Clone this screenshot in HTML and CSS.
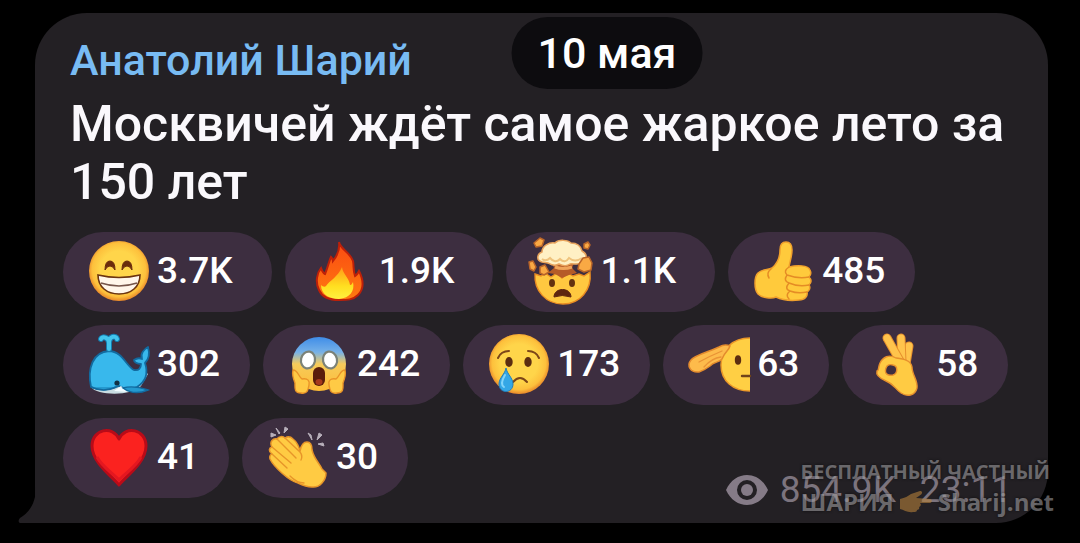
FILE: index.html
```
<!DOCTYPE html>
<html lang="ru">
<head>
    <meta charset="UTF-8">
    <meta name="viewport" content="width=device-width, initial-scale=1.0">
    <title>Анатолий Шарий</title>
    <link rel="stylesheet" href="styles.css">
</head>
<body>
    <svg class="defs" width="0" height="0" aria-hidden="true">
        <defs>
            <radialGradient id="face" cx="50%" cy="48%" r="52%">
                <stop offset="0.6" stop-color="#ffd54a"/>
                <stop offset="0.86" stop-color="#fdc03c"/>
                <stop offset="1" stop-color="#e8872a"/>
            </radialGradient>
            <linearGradient id="scream" x1="0" y1="0" x2="0" y2="1">
                <stop offset="0" stop-color="#3f8de8"/>
                <stop offset="0.28" stop-color="#76b1e8"/>
                <stop offset="0.5" stop-color="#f6cb5b"/>
                <stop offset="1" stop-color="#fdbb35"/>
            </linearGradient>
            <linearGradient id="flame" x1="0" y1="0" x2="0" y2="1">
                <stop offset="0" stop-color="#fa4a12"/>
                <stop offset="1" stop-color="#ff7a10"/>
            </linearGradient>
            <linearGradient id="flame-core" x1="0" y1="0" x2="0" y2="1">
                <stop offset="0" stop-color="#ff9b18"/>
                <stop offset="0.6" stop-color="#ffdf20"/>
                <stop offset="1" stop-color="#fff040"/>
            </linearGradient>
        </defs>
    </svg>

    <main class="chat">
        <article class="bubble">
            <a class="author" href="#author">Анатолий Шарий</a>
            <p class="message">Москвичей ждёт самое жаркое лето за 150 лет</p>

            <div class="reactions">
                <button class="reaction reaction-long" type="button">
                    <svg class="emoji" viewBox="0 0 64 64" aria-hidden="true">
                        <circle cx="32" cy="32" r="30" fill="url(#face)"/>
                        <path d="M18 31Q18 22 23 22T28 31Q26 27 23 27T18 31ZM35 31Q35 22 40 22T45 31Q43 27 40 27T35 31Z" fill="#6b2c0c" stroke="#6b2c0c"/>
                        <path d="M11 36Q32 41 53 36C53 48 44 55 32 55S11 48 11 36Z" fill="#fff6ea" stroke="#6b3410" stroke-width="1.6"/>
                        <path d="M14 44Q32 50 50 44" fill="none" stroke="#75554a" stroke-width="1.5"/>
                    </svg>
                    <span>3.7K</span>
                </button>
                <button class="reaction reaction-long" type="button">
                    <svg class="emoji" viewBox="0 0 64 64" aria-hidden="true">
                        <path d="M30 3C31 10 41 13 44 22C45 27 44 32 46 37C48 36 49 34 50 32C55 42 55 50 49 56C44 61 38 61 30 61C20 61 13 58 10 51C6 43 8 34 12 29C13 32 14 34 16 35C19 28 20 22 22 18C23 19 24 20 24 22C28 17 31 10 30 3Z" fill="url(#flame)" stroke="#bd2009" stroke-width="2"/>
                        <path d="M33 28C34 36 40 38 41 46C43 46 43 44 44 43C46 52 41 59 30 60C20 60 12 55 12 46C14 48 16 48 17 47C20 42 29 38 33 28Z" fill="url(#flame-core)"/>
                    </svg>
                    <span>1.9K</span>
                </button>
                <button class="reaction reaction-long" type="button">
                    <svg class="emoji" viewBox="0 0 64 64" aria-hidden="true">
                        <path d="M5 35L11 37L15 34L21 38L27 34L32 39L38 34L43 37L49 35L54 37L60 33C62 51 50 65 33 65C16 65 4 52 5 35Z" fill="#ffc840" stroke="#e98b22" stroke-width="1.4"/>
                        <path d="M22 24H44L42 29L47 34L39 36L32 39L25 35L18 34L24 29Z" fill="#b55b28"/>
                        <path d="M25 28Q33 31 42 28" fill="none" stroke="#f0a45a" stroke-width="3"/>
                        <path d="M12 23C5 21 8 14 12 13C12 7 19 3 25 4C29 0 38 1 41 4C48 4 51 8 52 12C58 15 57 21 52 23C48 27 43 24 40 25C36 28 31 26 29 25C24 28 20 25 18 24Z" fill="#fff0c4" stroke="#e8a35c" stroke-width="1.5"/>
                        <path d="M12 20Q16 23 20 19Q25 25 30 20Q35 25 39 19Q45 24 52 19" fill="none" stroke="#efc37d" stroke-width="2"/>
                        <path d="M4 4L10-1L14 1L12 7L6 8ZM54 5L58 3L60 6L58 10L54 9ZM-1 23L3 22L6 28L4 32L0 30ZM10 28L15 26L19 33L14 36L10 34ZM49 25L53 19L59 18L62 24L61 31L54 33L48 30Z" fill="#f9a944" stroke="#b96529" stroke-width="1.5" stroke-linejoin="round"/>
                        <ellipse cx="22" cy="44" rx="3" ry="4" fill="#63310f"/>
                        <ellipse cx="42" cy="44" rx="3" ry="4" fill="#63310f"/>
                        <path d="M24 58C24 48 41 48 41 58Q32 55 24 58Z" fill="#5f250f" stroke="#5f250f" stroke-linejoin="round"/>
                    </svg>
                    <span>1.1K</span>
                </button>
                <button class="reaction" type="button">
                    <svg class="emoji" viewBox="0 0 64 64" aria-hidden="true">
                        <path d="M34 3C38 3 40 6 40 11C40 17 38 22 37 28C45 26 56 26 58 31C59 33 59 36 57 38C60 41 59 44 57 46C59 49 57 52 55 53C56 57 53 61 47 61C38 62 30 61 24 58C20 60 10 59 6 55C2 50 2 38 6 34C10 30 16 31 20 29C26 24 28 18 28 11C28 5 30 3 34 3Z" fill="#ffca3c" stroke="#f0a02c" stroke-width="1.5"/>
                        <path d="M19 30Q14 34 17 39M37 28Q31 32 35 36Q46 40 57 38M35 36Q31 42 37 44Q46 48 57 46M37 44Q32 50 38 52Q46 55 55 53M38 52Q33 56 37 60" fill="none" stroke="#e58c25" stroke-width="1.5" stroke-linecap="round"/>
                    </svg>
                    <span>485</span>
                </button>
                <button class="reaction" type="button">
                    <svg class="emoji" viewBox="0 0 64 64" aria-hidden="true">
                        <path d="M4 55C10 64 46 64 54 54L61 42L56 38L28 50Z" fill="#c9dce2"/>
                        <path d="M4 55C0 36 6 20 22 19C35 19 40 35 47 38C52 39 54 36 54 32C50 32 47 30 47 28C50 26 53 26 55 27C53 22 57 17 61 15C63 22 62 27 58 31C62 43 58 50 50 55C44 58 37 57 32 54C24 58 12 59 4 55Z" fill="#38b8ec" stroke="#126a9f" stroke-width="1.8" stroke-linejoin="round"/>
                        <path d="M27 59L34 54L40 60Z" fill="#f2fbff"/>
                        <path d="M4 55Q17 61 29 55M36 56Q46 53 61 58Q47 64 36 56Z" fill="#249ad0" stroke="#126a9f" stroke-width="1.5"/>
                        <path d="M22 17V8M22 11C22 5 15 4 14 7M22 11C22 4 29 3 30 7" fill="none" stroke="#147caf" stroke-width="6" stroke-linecap="round"/>
                        <path d="M22 17V8M22 11C22 5 15 4 14 7M22 11C22 4 29 3 30 7" fill="none" stroke="#43c6ed" stroke-width="4" stroke-linecap="round"/>
                        <circle cx="30" cy="51" r="2.6" fill="#123043"/>
                    </svg>
                    <span>302</span>
                </button>
                <button class="reaction" type="button">
                    <svg class="emoji" viewBox="0 0 64 64" aria-hidden="true">
                        <circle cx="32" cy="32" r="27" fill="url(#scream)"/>
                        <ellipse cx="21" cy="28" rx="7" ry="8.5" transform="rotate(12 21 28)" fill="#fff" stroke="#7b8278" stroke-width="2.2"/>
                        <ellipse cx="43" cy="28" rx="7" ry="8.5" transform="rotate(-12 43 28)" fill="#fff" stroke="#7b8278" stroke-width="2.2"/>
                        <rect x="26" y="35" width="12" height="19" rx="6" fill="#5a1d0b"/>
                        <ellipse cx="32" cy="50" rx="3.5" ry="3" fill="#a5391d"/>
                        <path d="M6 38C11 38 11 44 15 47C21 46 23 49 22 53C21 59 20 62 14 61C7 61 8 56 8 51C6 46 5 42 6 38ZM58 38C53 38 53 44 49 47C43 46 41 49 42 53C43 59 44 62 50 61C57 61 56 56 56 51C58 46 59 42 58 38Z" fill="#ffca45" stroke="#e99328" stroke-width="1.4"/>
                    </svg>
                    <span>242</span>
                </button>
                <button class="reaction" type="button">
                    <svg class="emoji" viewBox="0 0 64 64" aria-hidden="true">
                        <circle cx="32" cy="32" r="30" fill="url(#face)"/>
                        <ellipse cx="22" cy="30" rx="3.7" ry="5" fill="#5c2d10"/>
                        <ellipse cx="41" cy="30" rx="3.7" ry="5" fill="#5c2d10"/>
                        <path d="M11 26Q14 19 22 19M41 19Q49 19 52 26M26 50Q33 42 40 50" fill="none" stroke="#7c4618" stroke-width="2" stroke-linecap="round"/>
                        <path d="M19 36C20 42 26 46 26 52C26 62 12 62 12 52C12 46 18 42 19 36Z" fill="#34a7e6" stroke="#237eb9"/>
                        <path d="M18 43C15 48 14 53 17 55" fill="none" stroke="#83d5fa" stroke-width="2" stroke-linecap="round"/>
                    </svg>
                    <span>173</span>
                </button>
                <button class="reaction" type="button">
                    <svg class="emoji" viewBox="0 0 64 64" aria-hidden="true">
                        <path d="M63 6C46 6 34 17 34 33S46 59 63 59Z" fill="#ffcf44"/>
                        <path d="M63 6C46 6 34 17 34 33S46 59 63 59" fill="none" stroke="#eb9828" stroke-width="1.5"/>
                        <ellipse cx="51" cy="28" rx="3.2" ry="4.7" fill="#5c2d10"/>
                        <path d="M55 44H63" stroke="#70431a" stroke-width="2.4" stroke-linecap="round"/>
                        <path d="M4 28C8 23 24 19 32 15C37 12 41 13 43 14C42 18 38 20 36 25C34 31 27 29 23 34C19 37 15 39 12 40C4 41-1 34 4 28Z" fill="#fdbb4b" stroke="#e48b2d" stroke-width="1.5"/>
                        <path d="M12 30Q23 24 35 19M17 35Q25 26 34 25" fill="none" stroke="#e99335" stroke-width="1.3" stroke-linecap="round"/>
                    </svg>
                    <span>63</span>
                </button>
                <button class="reaction" type="button">
                    <svg class="emoji" viewBox="0 0 64 64" aria-hidden="true">
                        <g stroke-linecap="round">
                            <path d="M43 14L40 32" stroke="#e6902d" stroke-width="9"/>
                            <path d="M43 14L40 32" stroke="#ffc44c" stroke-width="7"/>
                            <path d="M35 6L36 30" stroke="#e6902d" stroke-width="9"/>
                            <path d="M35 6L36 30" stroke="#ffc44c" stroke-width="7"/>
                            <path d="M21 6L34 29" stroke="#e6902d" stroke-width="9"/>
                            <path d="M21 6L34 29" stroke="#ffc44c" stroke-width="7"/>
                        </g>
                        <path fill-rule="evenodd" d="M14 31C17 25 23 22 30 26C37 27 45 28 46 35C46 43 52 48 51 56C49 64 41 65 35 61C29 57 28 52 20 49C13 46 10 42 11 39C13 39 12 35 14 31ZM20 36C18 42 22 44 27 43C32 41 32 34 27 33C24 32 21 33 20 36Z" fill="#ffcb43" stroke="#e6902d" stroke-width="1.4"/>
                    </svg>
                    <span>58</span>
                </button>
                <button class="reaction" type="button">
                    <svg class="emoji" viewBox="0 0 64 64" aria-hidden="true">
                        <path d="M32 60C27 53 5 38 5 21C5 4 26 0 32 14C38 0 59 4 59 21C59 38 37 53 32 60Z" fill="#fb221f" stroke="#b90b18" stroke-width="3" stroke-linejoin="round"/>
                        <path d="M10 32C15 42 27 49 32 55C37 49 49 42 54 32" fill="none" stroke="#e41720" stroke-width="3"/>
                    </svg>
                    <span>41</span>
                </button>
                <button class="reaction" type="button">
                    <svg class="emoji" viewBox="0 0 64 64" aria-hidden="true">
                        <path d="M34 26C35 21 37 17 41 17C45 17 46 21 46 25C48 34 54 39 56 44L60 48C60 55 54 63 46 62C40 62 36 60 32 58C23 56 8 42 4 34C3 31 5 29 6 29C2 26 3 23 6 22C3 17 7 13 11 14C13 11 17 11 19 13C22 11 25 12 27 14C31 17 33 22 34 26Z" fill="#ffcb43" stroke="#e79529" stroke-width="1.5" stroke-linejoin="round"/>
                        <path d="M6 29L21 43M6 22L25 38M11 14L30 33M19 13L34 27Q37 31 35 35M24 51Q31 58 38 58" fill="none" stroke="#e79529" stroke-width="1.4" stroke-linecap="round"/>
                        <path d="M5 8L10 10L5 12ZM10 3L14 8L13 9ZM19 2L22 4L18 8ZM42 8L45 10L46 15ZM53 8L56 10L51 15ZM52 19L57 18L58 21Z" fill="#b7afba" stroke="#b7afba" stroke-linejoin="round"/>
                    </svg>
                    <span>30</span>
                </button>
            </div>

            <footer class="meta">
                <svg class="eye" viewBox="0 0 42 32" aria-hidden="true">
                    <path fill-rule="evenodd" d="M0 16C9-4 33-4 42 16C33 36 9 36 0 16ZM11 16A10 10 0 1 0 31 16A10 10 0 1 0 11 16Z"/>
                    <circle cx="21" cy="16" r="6"/>
                </svg>
                <span>854.9K</span>
                <time>23:11</time>
            </footer>

            <svg class="tail" viewBox="0 0 18 36" aria-hidden="true">
                <path d="M18 0C18 16 11 26 2 31C0 33 0 36 3 36H18Z"/>
            </svg>
        </article>

        <time class="date">10 мая</time>

        <div class="watermark">
            <div class="watermark-top">БЕСПЛАТНЫЙ ЧАСТНЫЙ</div>
            <div class="watermark-bottom">
                <span>ШАРИЯ</span>
                <svg class="hand" viewBox="0 0 32 22" aria-hidden="true">
                    <path d="M0 8C5 7 8 5 11 3L20 0C23 0 23 3 19 5L16 7L30 8C33 9 32 12 29 12L20 12C22 14 20 16 19 16C20 18 18 19 17 19C17 21 15 21 13 21C8 22 4 19 0 18Z"/>
                </svg>
                <span>Sharij.net</span>
            </div>
        </div>
    </main>
</body>
</html>
```
FILE: styles.css
```
:root {
    --bubble-color: #232024;
    --reaction-color: #3d2e40;
    --author-color: #78bbf3;
    --text-color: #faf8fc;
    --meta-color: #7c747e;
}
* {
    box-sizing: border-box;
}
body {
    margin: 0;
    background: #000;
    color: var(--text-color);
    font-family: Roboto, "Noto Sans", sans-serif;
    font-weight: 500;
}
.defs {
    position: absolute;
}
.chat {
    position: relative;
    padding: 13px 32px 20px 35px;
}
.bubble {
    position: relative;
    padding: 23px 32px 25px 28px;
    background: var(--bubble-color);
    border-radius: 52px 52px 52px 0;
}
.author {
    display: block;
    padding-left: 7px;
    color: var(--author-color);
    font-size: 43px;
    line-height: 48px;
    text-decoration: none;
}
.message {
    margin: 11px 0 21px;
    padding-left: 7px;
    font-size: 50px;
    line-height: 58px;
}
.reactions {
    display: flex;
    flex-wrap: wrap;
    gap: 13px;
}
.reaction {
    display: flex;
    align-items: center;
    gap: 6px;
    height: 80px;
    padding: 0 30px 3px 24px;
    border: none;
    border-radius: 40px;
    background: var(--reaction-color);
    color: #fff;
    font-family: inherit;
    font-size: 37px;
    font-weight: 500;
    cursor: pointer;
}
.reaction-long {
    padding-right: 39px;
}
.emoji {
    width: 64px;
    height: 64px;
    overflow: visible;
}
.meta {
    position: absolute;
    right: 36px;
    bottom: 12px;
    display: flex;
    align-items: center;
    gap: 12px;
    color: var(--meta-color);
    font-size: 37px;
    font-weight: 400;
    line-height: 42px;
}
.meta time {
    padding-left: 12px;
}
.eye {
    width: 42px;
    height: 32px;
    fill: #857b87;
}
.tail {
    position: absolute;
    left: -17px;
    bottom: 0;
    width: 18px;
    height: 36px;
    fill: var(--bubble-color);
}
.date {
    position: absolute;
    top: 17px;
    left: calc(50% + 67px);
    transform: translateX(-50%);
    padding: 0 26px;
    border-radius: 36px;
    background: #0d0c0f;
    color: #fff;
    font-size: 43px;
    line-height: 72px;
    white-space: nowrap;
}
.watermark {
    position: absolute;
    right: 26px;
    bottom: 26px;
    color: #9a989b;
    font-family: "Open Sans", "Noto Sans", sans-serif;
    font-weight: 700;
    opacity: 0.6;
    text-shadow: 0 0 3px #000;
    white-space: nowrap;
}
.watermark-top {
    font-size: 20px;
    line-height: 30px;
}
.watermark-bottom {
    display: flex;
    align-items: center;
    gap: 6px;
    font-size: 24px;
    line-height: 30px;
}
.hand {
    width: 32px;
    height: 22px;
    fill: #b5803a;
}
```
